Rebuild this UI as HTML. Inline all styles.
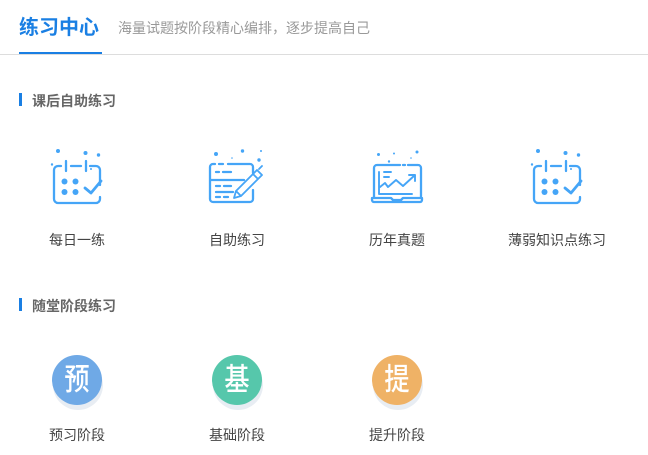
<!DOCTYPE html>
<html lang="zh"><head><meta charset="utf-8"><title>练习中心</title>
<style>
html,body{margin:0;padding:0;background:#fff}
body{width:648px;height:455px;overflow:hidden;position:relative;font-family:"Liberation Sans","Noto Sans CJK SC",sans-serif}
.t{position:absolute;white-space:nowrap;line-height:20px}
.title{left:19px;top:18px;font-size:20px;font-weight:700;color:#1a7fe3}
.sub{left:118px;top:18px;font-size:14px;color:#999}
.sec{left:32px;font-size:14px;font-weight:700;color:#666}
.lab{font-size:14px;color:#444;text-align:center;width:140px}
.bar{position:absolute;left:19px;width:3px;height:13px;background:#1a7fe3}
.c{position:absolute;width:50px;height:50px;border-radius:50%;top:355px;color:#fff;font-size:28px;font-weight:500;line-height:50px;text-align:center;box-shadow:1px 5px 0 #e8edf3}
.c span{display:inline-block;transform:scale(.9,1.1)}
svg{position:absolute;left:0;top:0}
.i{fill:none;stroke:#45a5f7;stroke-width:2.3;stroke-linecap:round;stroke-linejoin:round}
.d{fill:#45a5f7}
</style></head><body>
<div class="t title">练习中心</div>
<div class="t sub">海量试题按阶段精心编排，逐步提高自己</div>
<div style="position:absolute;left:0;top:54px;width:648px;height:1px;background:#ddd"></div>
<div style="position:absolute;left:19px;top:52px;width:83px;height:2px;background:#1a7fe3"></div>
<div class="bar" style="top:93px"></div><div class="t sec" style="top:91px">课后自助练习</div>
<div class="bar" style="top:298px"></div><div class="t sec" style="top:296px">随堂阶段练习</div>
<svg width="648" height="455" viewBox="0 0 648 455">
<g transform="translate(40 140)">
<path class="i" d="M21 26h-3a4 4 0 0 0-4 4v29a4 4 0 0 0 4 4h38a4 4 0 0 0 4-4v-2M60 45V30a4 4 0 0 0-4-4h-6M31 26h10M26 21v10M46 21v10"/>
<path class="i" stroke-width="2.800" style="stroke-width:2.800" d="M45 48l6 5 10-12"/>
<g class="d"><circle cx="24.500" cy="41.500" r="3"/><circle cx="35.500" cy="41.500" r="3"/><circle cx="24.500" cy="52" r="3"/><circle cx="35.500" cy="52" r="3"/><circle cx="18" cy="11" r="2"/><circle cx="45.500" cy="13" r="2"/><circle cx="58.500" cy="15" r="1.700"/><circle cx="12" cy="24.500" r="1.200"/><circle cx="51" cy="29" r="1"/></g>
</g>
<g transform="translate(520 140)">
<path class="i" d="M21 26h-3a4 4 0 0 0-4 4v29a4 4 0 0 0 4 4h38a4 4 0 0 0 4-4v-2M60 45V30a4 4 0 0 0-4-4h-6M31 26h10M26 21v10M46 21v10"/>
<path class="i" style="stroke-width:2.800" d="M45 48l6 5 10-12"/>
<g class="d"><circle cx="24.500" cy="41.500" r="3"/><circle cx="35.500" cy="41.500" r="3"/><circle cx="24.500" cy="52" r="3"/><circle cx="35.500" cy="52" r="3"/><circle cx="18" cy="11" r="2"/><circle cx="45.500" cy="13" r="2"/><circle cx="58.500" cy="15" r="1.700"/><circle cx="12" cy="24.500" r="1.200"/><circle cx="51" cy="29" r="1"/></g>
</g>
<g transform="translate(200 140)">
<path class="i" d="M15 24h-2a3 3 0 0 0-3 3v32a3 3 0 0 0 3 3h37a3 3 0 0 0 3-3v-9M53 33v-6a3 3 0 0 0-3-3H28M19 24h4M10 40h34M16 32h3M23 32h8M16 46h4M24 46h7M16 52h17M16 57h4M24 57h4"/>
<path class="i" style="stroke-width:1.800" d="M34 58l2-7 21-21 5 5-21 21zM36 51l5 5M53 34l5 5M59 29l3-3"/>
<g class="d"><circle cx="16" cy="14" r="2"/><circle cx="42.500" cy="11" r="1.700"/><circle cx="59" cy="20" r="1.700"/><circle cx="61" cy="11" r="1"/><circle cx="32" cy="18" r=".8"/></g>
</g>
<g transform="translate(360 140)">
<path class="i" d="M14 58V28a3 3 0 0 1 3-3h23M48 25h10a3 3 0 0 1 3 3v30M43 25h2M12 58h19l2 2h8l2-2h19v2a2 2 0 0 1-2 2H14a2 2 0 0 1-2-2z"/>
<path class="i" style="stroke-width:1.900" d="M19 32v22h33M24 32h7M24 37h5M20 47l5-4 3 4 8-7 7 6 12-11M49 35h6v6"/>
<g class="d"><circle cx="18.500" cy="14.500" r="1.500"/><circle cx="34" cy="13.500" r="1"/><circle cx="51" cy="18" r=".8"/><circle cx="57" cy="12" r="1.500"/><circle cx="29" cy="21.500" r="1.200"/></g>
</g>
</svg>
<div class="t lab" style="left:7px;top:230px">每日一练</div>
<div class="t lab" style="left:167px;top:230px">自助练习</div>
<div class="t lab" style="left:327px;top:230px">历年真题</div>
<div class="t lab" style="left:487px;top:230px">薄弱知识点练习</div>
<div class="c" style="left:52px;background:#6fa9e6"><span>预</span></div>
<div class="c" style="left:212px;background:#56c7ab"><span>基</span></div>
<div class="c" style="left:372px;background:#efb266"><span>提</span></div>
<div class="t lab" style="left:7px;top:425px">预习阶段</div>
<div class="t lab" style="left:167px;top:425px">基础阶段</div>
<div class="t lab" style="left:327px;top:425px">提升阶段</div>
</body></html>
